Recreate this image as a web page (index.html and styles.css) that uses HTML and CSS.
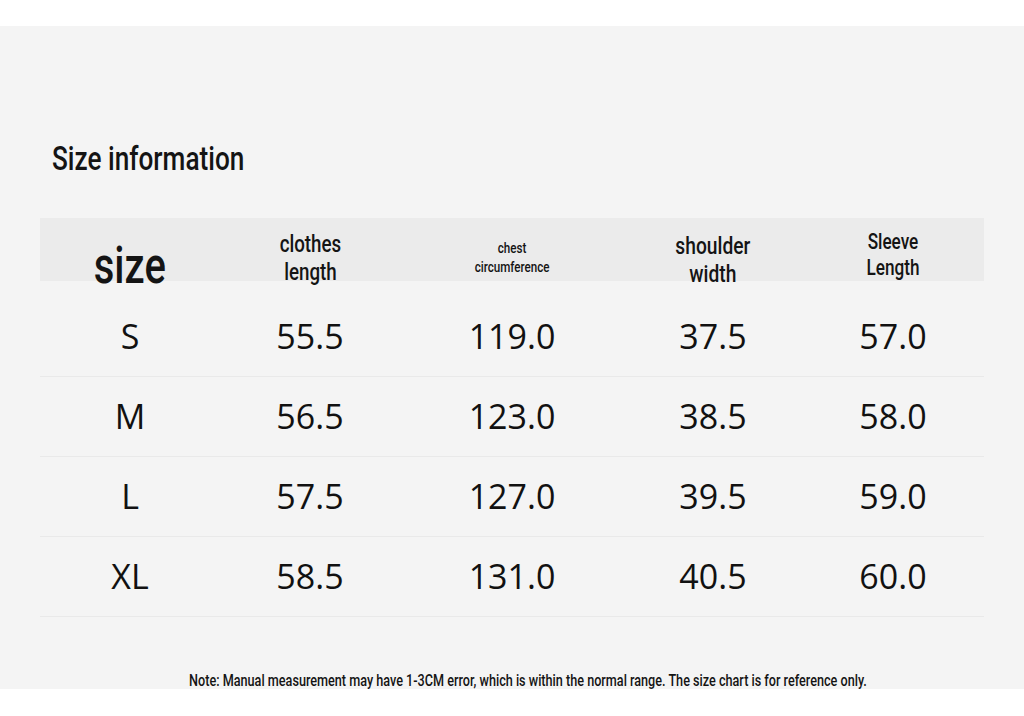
FILE: index.html
```html
<!DOCTYPE html>
<html lang="en">
<head>
<meta charset="utf-8">
<title>Size information</title>
<link rel="stylesheet" href="styles.css">
</head>
<body>
<div class="top"></div>
<main class="sheet">
  <h1 class="title"><span class="cond">Size information</span></h1>
  <div class="table">
    <div class="row head">
      <div class="cell"><span class="cond size-label">size</span></div>
      <div class="cell"><span class="cond h-lg">clothes<br>length</span></div>
      <div class="cell"><span class="cond h-sm">chest<br>circumference</span></div>
      <div class="cell"><span class="cond h-lg h-wide">shoulder<br>width</span></div>
      <div class="cell"><span class="cond h-md">Sleeve<br>Length</span></div>
    </div>
    <div class="row">
      <div class="cell num">S</div><div class="cell num">55.5</div><div class="cell num">119.0</div><div class="cell num">37.5</div><div class="cell num">57.0</div>
    </div>
    <div class="row">
      <div class="cell num">M</div><div class="cell num">56.5</div><div class="cell num">123.0</div><div class="cell num">38.5</div><div class="cell num">58.0</div>
    </div>
    <div class="row">
      <div class="cell num">L</div><div class="cell num">57.5</div><div class="cell num">127.0</div><div class="cell num">39.5</div><div class="cell num">59.0</div>
    </div>
    <div class="row">
      <div class="cell num">XL</div><div class="cell num">58.5</div><div class="cell num">131.0</div><div class="cell num">40.5</div><div class="cell num">60.0</div>
    </div>
  </div>
  <p class="note"><span class="cond">Note: Manual measurement may have 1-3CM error, which is within the normal range. The size chart is for reference only.</span></p>
</main>
</body>
</html>
```

FILE: styles.css
```css
html, body {
  margin: 0;
  padding: 0;
  background: #ffffff;
  color: #141414;
}
body {
  width: 1024px;
  height: 716px;
  overflow: hidden;
  font-family: "Roboto", "Liberation Sans", sans-serif;
}
.top {
  height: 26px;
  background: #ffffff;
}
.sheet {
  height: 663px;
  box-sizing: border-box;
  background: #f4f4f4;
  padding: 112px 40px 0;
  display: flex;
  flex-direction: column;
}
.cond {
  display: inline-block;
  white-space: nowrap;
  transform: scaleX(0.7);
  transform-origin: center center;
}
.title {
  margin: 0 0 39px 12px;
  height: 40px;
  line-height: 40px;
  font-size: 34px;
  font-weight: 500;
}
.title .cond {
  transform: scaleX(0.77);
  transform-origin: left center;
}
.table {
  display: flex;
  flex-direction: column;
}
.row {
  display: grid;
  grid-template-columns: 180px 180px 224px 178px 182px;
  height: 80px;
  box-sizing: border-box;
  border-bottom: 1px solid #e9e9e9;
}
.row.head {
  border-bottom: none;
  background: linear-gradient(#ebebeb, #ebebeb) 0 1px / 100% 63px no-repeat;
}
.cell {
  display: flex;
  align-items: center;
  justify-content: center;
  text-align: center;
}
.head .cell {
  align-items: flex-start;
}
.size-label {
  font-size: 52px;
  font-weight: 500;
  line-height: 52px;
  margin-top: 23px;
  transform: scaleX(0.77);
}
.h-lg {
  font-size: 24px;
  font-weight: 500;
  line-height: 28px;
  margin-top: 13px;
  transform: scaleX(0.78);
}
.h-wide {
  margin-top: 15px;
  transform: scaleX(0.8);
}
.h-md {
  font-size: 22px;
  font-weight: 500;
  line-height: 26px;
  margin-top: 12px;
  transform: scaleX(0.78);
}
.h-sm {
  font-size: 14px;
  font-weight: 500;
  line-height: 19px;
  margin-top: 22px;
  transform: scaleX(0.83);
}
.num {
  font-family: "Open Sans", "Noto Sans", sans-serif;
  font-size: 34px;
  font-weight: 400;
  color: #111111;
  padding-bottom: 1px;
}
.note {
  margin: 54px 0 0;
  padding-left: 32px;
  height: 20px;
  line-height: 20px;
  font-size: 16px;
  font-weight: 500;
  text-align: center;
}
.note .cond {
  transform: scaleX(0.79);
}
```
